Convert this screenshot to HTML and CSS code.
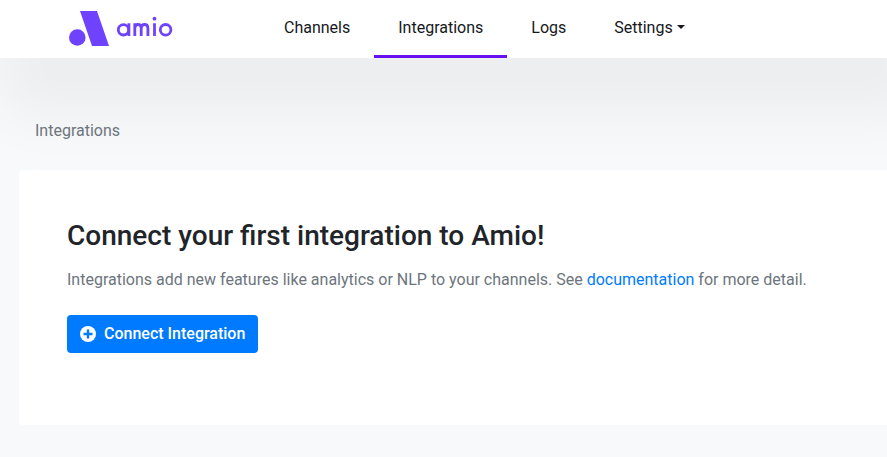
FILE: index.html
```html
<!DOCTYPE html>
<html lang="en">
<head>
    <meta charset="UTF-8">
    <meta name="viewport" content="width=device-width, initial-scale=1.0">
    <title>Integrations - Amio</title>
    <link rel="stylesheet" href="styles.css">
</head>
<body>

    <header class="navbar">
        <a class="brand" href="#" aria-label="amio">
            <svg class="brand-mark" width="40" height="36" viewBox="0 0 40 36" aria-hidden="true">
                <path d="M11 0h17l12 35H23z"/>
                <circle cx="8.300" cy="26.500" r="8.300"/>
            </svg>
            <svg class="brand-name" width="56" height="22" viewBox="0 0 56 22" aria-hidden="true">
                <circle cx="6.500" cy="13.800" r="5.200"/>
                <path d="M11.900 7.300v12.700M17.800 20V7.300M17.800 13c0-3 1.300-4.500 3.200-4.500s3.200 1.400 3.200 3.800V20M24.200 13c0-3 1.400-4.500 3.400-4.500s3.300 1.400 3.300 3.800V20M37.500 7.300v12.700"/>
                <circle cx="48.600" cy="13.800" r="5.300"/>
                <circle class="dot" cx="37.500" cy="2.700" r="1.900"/>
            </svg>
        </a>
        <nav class="nav">
            <a class="nav-link" href="#">Channels</a>
            <a class="nav-link active" href="#">Integrations</a>
            <a class="nav-link" href="#">Logs</a>
            <button class="nav-link dropdown" type="button">Settings</button>
        </nav>
    </header>

    <main class="content">
        <div class="breadcrumb">Integrations</div>

        <section class="card">
            <h1>Connect your first integration to Amio!</h1>
            <p>Integrations add new features like analytics or NLP to your channels. See <a href="#">documentation</a> for more detail.</p>
            <button class="btn" type="button">
                <svg width="16" height="16" viewBox="0 0 16 16" aria-hidden="true">
                    <circle cx="8" cy="8" r="8" fill="#fff"/>
                    <path d="M8 3.500v9M3.500 8h9" stroke="#007bff" stroke-width="2.400"/>
                </svg>
                Connect Integration
            </button>
        </section>
    </main>

</body>
</html>
```

FILE: styles.css
```css
* {
    box-sizing: border-box;
}

body {
    margin: 0;
    font-family: Roboto, "Liberation Sans", sans-serif;
    font-size: 16px;
    line-height: 24px;
    color: #212529;
    background-color: #f8f9fb;
}

.navbar {
    display: flex;
    gap: 87px;
    height: 58px;
    padding-left: 69px;
    background-color: #fff;
    box-shadow: 20px 35px 60px 20px rgba(0, 0, 0, 0.05);
}

.brand {
    display: flex;
    gap: 8px;
    padding-top: 11px;
}

.brand-mark {
    fill: #6f42ff;
}

.brand-name {
    margin-top: 5px;
    fill: none;
    stroke: #6f42ff;
    stroke-width: 2.8;
}

.brand-name .dot {
    fill: #6f42ff;
    stroke: none;
}

.nav {
    display: flex;
}

.nav-link {
    padding: 16px 24px 15px;
    border: 0;
    border-bottom: 3px solid transparent;
    background: none;
    font: inherit;
    color: #16181b;
    text-decoration: none;
    white-space: nowrap;
}

.nav-link.active {
    border-bottom-color: #6610f2;
}

.dropdown::after {
    content: "";
    display: inline-block;
    margin-left: 4px;
    vertical-align: 4px;
    border-top: 4px solid;
    border-right: 4px solid transparent;
    border-left: 4px solid transparent;
}

.content {
    padding: 61px 0 32px 19px;
}

.breadcrumb {
    padding: 0 16px;
    margin-bottom: 27px;
    color: #6c757d;
}

.card {
    padding: 49px 48px 72px;
    border-radius: 4px 0 0 4px;
    background-color: #fff;
}

h1 {
    margin: 0 0 15px;
    font-size: 28px;
    font-weight: 500;
    line-height: 34px;
}

p {
    margin: 0 0 23px;
    color: #6c757d;
}

p a {
    color: #007bff;
    text-decoration: none;
}

.btn {
    display: inline-flex;
    align-items: center;
    gap: 8px;
    padding: 7px 13px;
    border: 0;
    border-radius: 4px;
    background-color: #007bff;
    color: #fff;
    font: inherit;
    font-weight: 500;
}
```
